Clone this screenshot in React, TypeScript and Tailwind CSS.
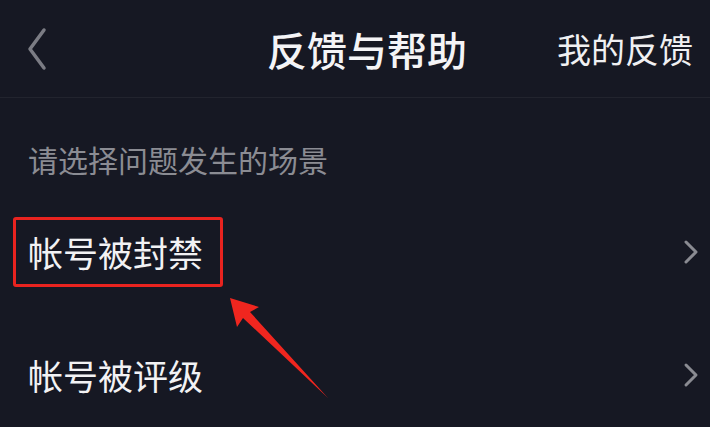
const FONT = { fontFamily: '"Noto Sans CJK SC", "Noto Sans", sans-serif' };

function ChevronRight() {
  return (
    <svg width="16" height="26" viewBox="0 0 16 26" className="shrink-0">
      <path d="M3 3 L13 13 L3 23" fill="none" stroke="#8a8b92" strokeWidth="3" strokeLinecap="round" strokeLinejoin="round" />
    </svg>
  );
}

function Row({ label, boxed }: { label: string; boxed?: boolean }) {
  return (
    <div className="flex h-[123px] items-center justify-between pr-[11px]">
      {boxed ? (
        <div className="ml-[13px] flex h-[70px] items-center rounded-[3px] border-[3px] border-[#e8231f] pl-[12px] pr-[17px]">
          <span className="text-[35px] leading-none text-[#f2f2f4]">{label}</span>
        </div>
      ) : (
        <span className="ml-[28px] text-[35px] leading-none text-[#f2f2f4]">{label}</span>
      )}
      <ChevronRight />
    </div>
  );
}

export default function App() {
  return (
    <div className="relative h-[427px] w-[710px] overflow-hidden bg-[#161823]" style={FONT}>
      {/* header */}
      <header className="flex h-[98px] items-center border-b border-[#22242e] pl-[26px] pr-[17px]">
        <svg width="22" height="44" viewBox="0 0 22 44" className="shrink-0">
          <path d="M18 3 L4 22 L18 41" fill="none" stroke="#7b7c84" strokeWidth="3.5" strokeLinecap="round" strokeLinejoin="round" />
        </svg>
        <h1 className="ml-[219px] text-[40px] font-medium leading-none text-[#f4f4f6]">反馈与帮助</h1>
        <span className="ml-auto text-[34px] leading-none text-[#f0f0f2]">我的反馈</span>
      </header>

      <div className="h-[92px] pl-[28px] pt-[46px]">
        <p className="text-[30px] leading-[30px] text-[#8b8c93]">请选择问题发生的场景</p>
      </div>

      <Row label="帐号被封禁" boxed />
      <Row label="帐号被评级" />

      {/* annotation arrow */}
      <svg className="pointer-events-none absolute left-0 top-0" width="710" height="427" viewBox="0 0 710 427">
        <path d="M230 298 L259 307 L250 312 L328 398 L243 318 L237 327 Z" fill="#f0261f" />
      </svg>
    </div>
  );
}
